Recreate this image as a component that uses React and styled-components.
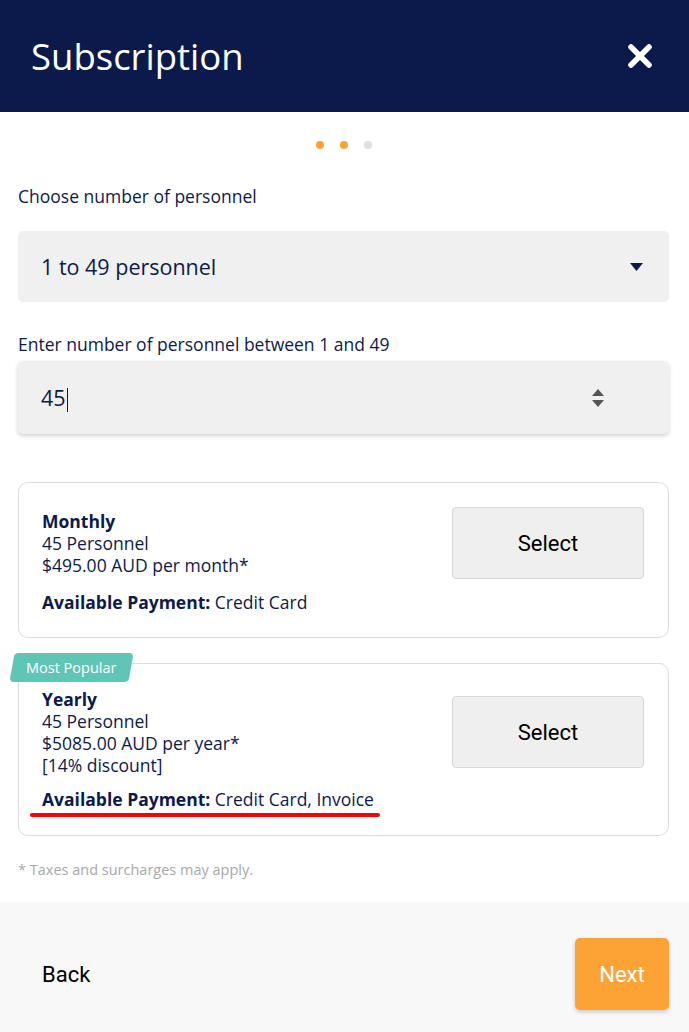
import React from 'react';
import styled, { createGlobalStyle } from 'styled-components';

const FONT = '"Open Sans", Roboto, "Liberation Sans", sans-serif';
const BUTTON_FONT = 'Roboto, "Liberation Sans", sans-serif';

const GlobalStyle = createGlobalStyle`
  html, body {
    margin: 0;
    padding: 0;
    background: #ffffff;
  }
  body {
    font-family: ${FONT};
    color: #0c1a4b;
  }
`;

const Page = styled.div`
  width: 689px;
  height: 1032px;
  display: flex;
  flex-direction: column;
  overflow: hidden;
`;

const Header = styled.header`
  height: 112px;
  background: #0c1a4b;
  display: flex;
  align-items: center;
  justify-content: space-between;
  padding: 0 36px 0 31px;
  box-sizing: border-box;
  flex-shrink: 0;
`;

const Title = styled.h1`
  margin: 0;
  font-size: 36.5px;
  font-weight: 400;
  color: #ffffff;
`;

const CloseButton = styled.button`
  border: 0;
  background: none;
  padding: 0;
  display: flex;
  cursor: pointer;
`;

const Body = styled.main`
  flex: 1;
  padding: 0 20px 0 18px;
  display: flex;
  flex-direction: column;
`;

const Steps = styled.div`
  display: flex;
  justify-content: center;
  gap: 16px;
  padding: 29px 0 36px;
`;

const Dot = styled.span`
  width: 8px;
  height: 8px;
  border-radius: 50%;
  background: ${p => (p.$active ? '#f9a134' : '#e0e0e0')};
`;

const Label = styled.label`
  font-size: 17.5px;
  line-height: 22px;
  color: #0c1a4b;
  display: block;
  margin-top: ${p => p.$mt || 0}px;
`;

const Field = styled.div`
  height: ${p => p.$h}px;
  margin-top: ${p => p.$mt}px;
  background: #f0f0f0;
  border-radius: 5px;
  display: flex;
  align-items: center;
  justify-content: space-between;
  padding: 0 ${p => p.$pr}px 0 23px;
  box-shadow: ${p => (p.$shadow ? '0 2px 4px rgba(0,0,0,0.18)' : 'none')};
  font-size: 21.5px;
  color: #0c1a4b;
`;

const Caret = styled.span`
  display: inline-block;
  width: 1px;
  height: 24px;
  background: #0c1a4b;
  margin-left: 1px;
  vertical-align: middle;
`;

const Spinner = styled.div`
  display: flex;
  flex-direction: column;
  gap: 4px;
`;

const Cards = styled.div`
  margin-top: 48px;
  display: flex;
  flex-direction: column;
  gap: 25px;
`;

const Card = styled.section`
  position: relative;
  border: 1px solid #dcdcdc;
  border-radius: 10px;
  padding: ${p => p.$pt}px 24px ${p => p.$pb}px 23px;
  display: flex;
  justify-content: space-between;
  align-items: flex-start;
`;

const Badge = styled.div`
  position: absolute;
  top: -11px;
  left: -7px;
  height: 29px;
  padding: 0 15px 0 14px;
  display: flex;
  align-items: center;
  font-size: 14.5px;
  color: #ffffff;
  background: #5fc5b5;
  border-radius: 4px;
  transform: skewX(-10deg);

  span {
    transform: skewX(10deg);
  }
`;

const Info = styled.div`
  font-size: 17.5px;
  line-height: 22px;
  color: #0c1a4b;
`;

const Plan = styled.div`
  font-weight: 700;
`;

const Payment = styled.div`
  margin-top: ${p => p.$mt}px;

  b {
    font-weight: 700;
  }
`;

const Highlight = styled.div`
  width: 350px;
  height: 4px;
  border-radius: 2px;
  background: #ff0000;
  margin: 3px 0 0 -12px;
`;

const SelectButton = styled.button`
  width: 192px;
  height: 72px;
  margin-top: ${p => p.$mt}px;
  background: #efefef;
  border: 1px solid #d8d8d8;
  border-radius: 4px;
  font-family: ${BUTTON_FONT};
  font-size: 22px;
  color: #000000;
  cursor: pointer;
`;

const Note = styled.p`
  margin: 24px 0 0;
  font-size: 14.5px;
  color: #a8a8a8;
`;

const Footer = styled.footer`
  height: 130px;
  flex-shrink: 0;
  background: #f8f8f8;
  display: flex;
  align-items: flex-start;
  justify-content: space-between;
  padding: 36px 20px 0 24px;
  box-sizing: border-box;
`;

const FooterButton = styled.button`
  height: 72px;
  border: 0;
  border-radius: 5px;
  font-family: ${BUTTON_FONT};
  font-size: 22px;
  padding: 0 18px;
  cursor: pointer;
  background: ${p => (p.$primary ? '#fda335' : 'transparent')};
  color: ${p => (p.$primary ? '#ffffff' : '#000000')};
  box-shadow: ${p => (p.$primary ? '0 2px 4px rgba(0,0,0,0.2)' : 'none')};
  width: ${p => (p.$primary ? '94px' : 'auto')};
`;

const plans = [
  {
    name: 'Monthly',
    lines: ['45 Personnel', '$495.00 AUD per month*'],
    payment: 'Credit Card',
    pt: 27,
    pb: 24,
    btnTop: -3,
    payTop: 15,
  },
  {
    name: 'Yearly',
    lines: ['45 Personnel', '$5085.00 AUD per year*', '[14% discount]'],
    payment: 'Credit Card, Invoice',
    popular: true,
    highlight: true,
    pt: 24,
    pb: 18,
    btnTop: 8,
    payTop: 12,
  },
];

export default function App() {
  return (
    <Page>
      <GlobalStyle />
      <Header>
        <Title>Subscription</Title>
        <CloseButton aria-label="Close">
          <svg width="26" height="26" viewBox="0 0 26 26">
            <path d="M4 4 L22 22 M22 4 L4 22" stroke="#fff" strokeWidth="5.5" strokeLinecap="round" />
          </svg>
        </CloseButton>
      </Header>

      <Body>
        <Steps>
          <Dot $active />
          <Dot $active />
          <Dot />
        </Steps>

        <Label>Choose number of personnel</Label>
        <Field $h={71} $mt={24} $pr={26}>
          <span>1 to 49 personnel</span>
          <svg width="13" height="8" viewBox="0 0 13 8">
            <path d="M0 0 H13 L6.5 8 Z" fill="#0c1a4b" />
          </svg>
        </Field>

        <Label $mt={31}>Enter number of personnel between 1 and 49</Label>
        <Field $h={73} $mt={6} $pr={65} $shadow>
          <span>
            45
            <Caret />
          </span>
          <Spinner>
            <svg width="12" height="7" viewBox="0 0 12 7">
              <path d="M6 0 L12 7 H0 Z" fill="#555" />
            </svg>
            <svg width="12" height="7" viewBox="0 0 12 7">
              <path d="M0 0 H12 L6 7 Z" fill="#555" />
            </svg>
          </Spinner>
        </Field>

        <Cards>
          {plans.map(plan => (
            <Card key={plan.name} $pt={plan.pt} $pb={plan.pb}>
              {plan.popular && (
                <Badge>
                  <span>Most Popular</span>
                </Badge>
              )}
              <Info>
                <Plan>{plan.name}</Plan>
                {plan.lines.map(line => (
                  <div key={line}>{line}</div>
                ))}
                <Payment $mt={plan.payTop}>
                  <b>Available Payment:</b> {plan.payment}
                </Payment>
                {plan.highlight && <Highlight />}
              </Info>
              <SelectButton $mt={plan.btnTop}>Select</SelectButton>
            </Card>
          ))}
        </Cards>

        <Note>* Taxes and surcharges may apply.</Note>
      </Body>

      <Footer>
        <FooterButton>Back</FooterButton>
        <FooterButton $primary>Next</FooterButton>
      </Footer>
    </Page>
  );
}
